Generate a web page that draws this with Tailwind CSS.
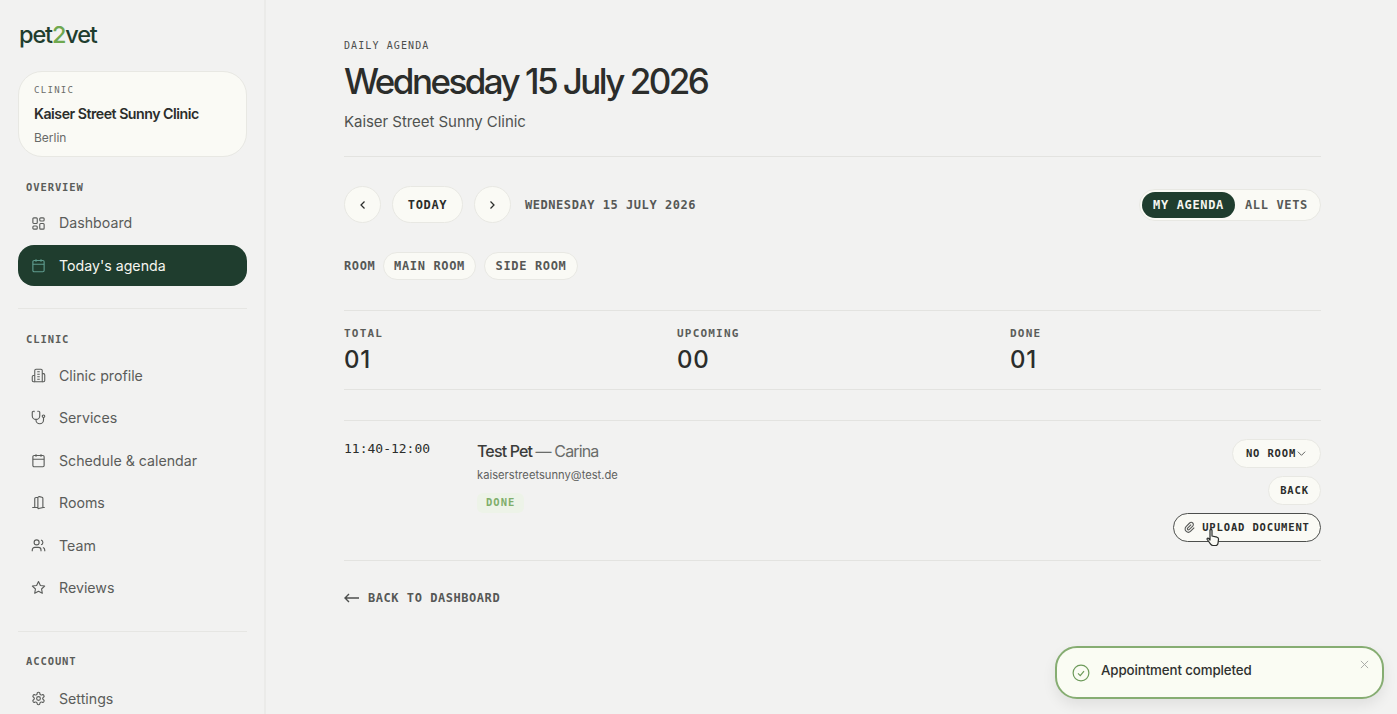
<!DOCTYPE html>
<html lang="en">
<head>
    <meta charset="UTF-8">
    <meta name="viewport" content="width=device-width, initial-scale=1.0">
    <title>pet2vet - Daily agenda</title>
    <script src="https://cdn.jsdelivr.net/npm/@tailwindcss/browser@4"></script>
</head>
<body class="bg-[#f2f2f1] h-[714px] overflow-hidden font-['Inter',sans-serif] text-[#2b2d2b]">
<div class="flex h-[714px] relative overflow-hidden">

    <!-- Sidebar -->
    <aside class="w-[266px] shrink-0 h-full border-r-2 border-[#ebebe9] px-[18px] pt-[19px] overflow-hidden">
        <div class="h-[32px] flex items-center pl-[1px] text-[23.5px] leading-[32px] font-medium tracking-[-1.15px] text-[#1f3d2e]">pet<span class="text-[#6fa84f]">2</span>vet</div>

        <div class="mt-[20px] h-[86px] w-[229px] rounded-[24px] bg-[#fafaf5] border border-[#e8e8e3] pl-[15px] pt-[12px]">
            <div class="font-['DejaVu_Sans_Mono',monospace] text-[9px] leading-[12px] tracking-[1.3px] text-[#6b6d6a]">CLINIC</div>
            <div class="mt-[7px] text-[14.2px] leading-[22px] font-semibold tracking-[-0.5px] text-[#2b2d2b]">Kaiser Street Sunny Clinic</div>
            <div class="mt-[5px] text-[12px] leading-[16px] text-[#686a68]">Berlin</div>
        </div>

        <div class="mt-[23px] pl-[8px] font-['DejaVu_Sans_Mono',monospace] font-bold text-[10.5px] leading-[14px] tracking-[0.9px] text-[#5b5d5a]">OVERVIEW</div>
        <nav class="mt-[8px] flex flex-col w-[229px]">
            <a class="h-[42px] flex items-center gap-[13px] pl-[13px] text-[14.2px] text-[#5a5c5a]">
                <svg class="w-[15px] h-[15px]" viewBox="0 0 24 24" fill="none" stroke="currentColor" stroke-width="1.8"><rect x="3" y="3" width="7" height="9" rx="1.5"/><rect x="14" y="3" width="7" height="5" rx="1.5"/><rect x="14" y="12" width="7" height="9" rx="1.5"/><rect x="3" y="16" width="7" height="5" rx="1.5"/></svg>
                Dashboard
            </a>
            <a class="h-[41px] mt-[1px] flex items-center gap-[13px] pl-[13px] rounded-[16px] bg-[#1f3d2e] text-[14.2px] text-[#f6f6f0]">
                <svg class="w-[15px] h-[15px] text-[#5f9c8f]" viewBox="0 0 24 24" fill="none" stroke="currentColor" stroke-width="1.8"><rect x="3" y="4" width="18" height="18" rx="2"/><path d="M8 2v4M16 2v4M3 10h18M8 14h.01M12 14h.01M16 14h.01M8 18h.01M12 18h.01M16 18h.01"/></svg>
                Today's agenda
            </a>
        </nav>

        <div class="mt-[22px] w-[229px] border-t border-[#e6e6e3]"></div>

        <div class="mt-[23px] pl-[8px] font-['DejaVu_Sans_Mono',monospace] font-bold text-[10.5px] leading-[14px] tracking-[0.9px] text-[#5b5d5a]">CLINIC</div>
        <nav class="mt-[8px] flex flex-col w-[229px] text-[14.2px] text-[#5a5c5a]">
            <a class="h-[42.5px] flex items-center gap-[13px] pl-[13px]">
                <svg class="w-[15px] h-[15px]" viewBox="0 0 24 24" fill="none" stroke="currentColor" stroke-width="1.7"><path d="M6 22V4a2 2 0 0 1 2-2h8a2 2 0 0 1 2 2v18Z"/><path d="M6 12H4a2 2 0 0 0-2 2v6a2 2 0 0 0 2 2h2M18 9h2a2 2 0 0 1 2 2v9a2 2 0 0 1-2 2h-2M10 6h4M10 10h4M10 14h4M10 18h4"/></svg>
                Clinic profile
            </a>
            <a class="h-[42.5px] flex items-center gap-[13px] pl-[13px]">
                <svg class="w-[15px] h-[15px]" viewBox="0 0 24 24" fill="none" stroke="currentColor" stroke-width="1.8"><path d="M4.8 2.3A.3.3 0 1 0 5 2H4a2 2 0 0 0-2 2v5a6 6 0 0 0 6 6 6 6 0 0 0 6-6V4a2 2 0 0 0-2-2h-1a.2.2 0 1 0 .3.3"/><path d="M8 15v1a6 6 0 0 0 6 6 6 6 0 0 0 6-6v-4"/><circle cx="20" cy="10" r="2"/></svg>
                Services
            </a>
            <a class="h-[42.5px] flex items-center gap-[13px] pl-[13px]">
                <svg class="w-[15px] h-[15px]" viewBox="0 0 24 24" fill="none" stroke="currentColor" stroke-width="1.8"><rect x="3" y="4" width="18" height="18" rx="2"/><path d="M8 2v4M16 2v4M3 10h18"/></svg>
                Schedule &amp; calendar
            </a>
            <a class="h-[42.5px] flex items-center gap-[13px] pl-[13px]">
                <svg class="w-[15px] h-[15px]" viewBox="0 0 24 24" fill="none" stroke="currentColor" stroke-width="1.8"><path d="M11 20H2M11 4.562v16.157a1 1 0 0 0 1.242.97L19 20V5.562a2 2 0 0 0-1.515-1.94l-4-1A2 2 0 0 0 11 4.561zM11 4H8a2 2 0 0 0-2 2v14M14 12h.01M22 20h-3"/></svg>
                Rooms
            </a>
            <a class="h-[42.5px] flex items-center gap-[13px] pl-[13px]">
                <svg class="w-[15px] h-[15px]" viewBox="0 0 24 24" fill="none" stroke="currentColor" stroke-width="1.8"><path d="M16 21v-2a4 4 0 0 0-4-4H6a4 4 0 0 0-4 4v2"/><circle cx="9" cy="7" r="4"/><path d="M22 21v-2a4 4 0 0 0-3-3.87M16 3.13a4 4 0 0 1 0 7.75"/></svg>
                Team
            </a>
            <a class="h-[42.5px] flex items-center gap-[13px] pl-[13px]">
                <svg class="w-[15px] h-[15px]" viewBox="0 0 24 24" fill="none" stroke="currentColor" stroke-width="1.8" stroke-linejoin="round"><path d="M12 2.5l3 6.2 6.8 1-4.9 4.7 1.2 6.8-6.1-3.2-6.1 3.2 1.2-6.8-4.9-4.7 6.8-1Z"/></svg>
                Reviews
            </a>
        </nav>

        <div class="mt-[22px] w-[229px] border-t border-[#e6e6e3]"></div>

        <div class="mt-[22px] pl-[8px] font-['DejaVu_Sans_Mono',monospace] font-bold text-[10.5px] leading-[14px] tracking-[0.9px] text-[#5b5d5a]">ACCOUNT</div>
        <nav class="mt-[9px] flex flex-col w-[229px] text-[14.2px] text-[#5a5c5a]">
            <a class="h-[42.5px] flex items-center gap-[13px] pl-[13px]">
                <svg class="w-[15px] h-[15px]" viewBox="0 0 24 24" fill="none" stroke="currentColor" stroke-width="1.8"><path d="M12.2 2h-.4a2 2 0 0 0-2 2v.2a2 2 0 0 1-1 1.7l-.4.3a2 2 0 0 1-2 0l-.2-.1a2 2 0 0 0-2.7.7l-.2.4a2 2 0 0 0 .7 2.7l.2.1a2 2 0 0 1 1 1.7v.5a2 2 0 0 1-1 1.8l-.2.1a2 2 0 0 0-.7 2.7l.2.4a2 2 0 0 0 2.7.7l.2-.1a2 2 0 0 1 2 0l.4.3a2 2 0 0 1 1 1.7v.2a2 2 0 0 0 2 2h.4a2 2 0 0 0 2-2v-.2a2 2 0 0 1 1-1.7l.4-.3a2 2 0 0 1 2 0l.2.1a2 2 0 0 0 2.7-.7l.2-.4a2 2 0 0 0-.7-2.7l-.2-.1a2 2 0 0 1-1-1.8v-.5a2 2 0 0 1 1-1.7l.2-.1a2 2 0 0 0 .7-2.7l-.2-.4a2 2 0 0 0-2.7-.7l-.2.1a2 2 0 0 1-2 0l-.4-.3a2 2 0 0 1-1-1.7V4a2 2 0 0 0-2-2Z"/><circle cx="12" cy="12" r="3"/></svg>
                Settings
            </a>
        </nav>
    </aside>

    <!-- Main -->
    <main class="flex-1 pl-[78px] pr-[76px] pt-[39px]">
        <div class="font-['DejaVu_Sans_Mono',monospace] text-[10px] leading-[14px] tracking-[1.1px] text-[#4d4f4d]">DAILY AGENDA</div>
        <h1 class="mt-[4px] text-[35px] leading-[48px] font-medium tracking-[-2.55px] text-[#2b2d2b]">Wednesday 15 July 2026</h1>
        <p class="mt-[5px] text-[15px] leading-[24px] tracking-[-0.05px] text-[#505250]">Kaiser Street Sunny Clinic</p>

        <div class="mt-[22px] border-t border-[#e3e3e0]"></div>

        <div class="mt-[29px] h-[37px] flex items-center justify-between">
            <div class="flex items-center gap-[11px]">
                <button class="w-[37px] h-[37px] rounded-full bg-[#fafaf5] border border-[#e8e8e3] flex items-center justify-center">
                    <svg class="w-[12px] h-[12px]" viewBox="0 0 24 24" fill="none" stroke="#2b2d2b" stroke-width="2.5"><path d="M15 5l-7 7 7 7"/></svg>
                </button>
                <button class="w-[71px] h-[37px] rounded-full bg-[#fafaf5] border border-[#e8e8e3] font-['DejaVu_Sans_Mono',monospace] font-bold text-[12px] tracking-[0.65px] text-[#2b2d2b]">TODAY</button>
                <button class="w-[37px] h-[37px] rounded-full bg-[#fafaf5] border border-[#e8e8e3] flex items-center justify-center">
                    <svg class="w-[12px] h-[12px]" viewBox="0 0 24 24" fill="none" stroke="#2b2d2b" stroke-width="2.5"><path d="M7 5l7 7-7 7"/></svg>
                </button>
                <span class="ml-[3px] font-['DejaVu_Sans_Mono',monospace] font-bold text-[12px] tracking-[0.55px] text-[#565856]">WEDNESDAY 15 JULY 2026</span>
            </div>
            <div class="h-[32px] w-[182px] rounded-full bg-[#fafaf5] border border-[#e8e8e3] flex items-center px-[2px] font-['DejaVu_Sans_Mono',monospace] font-bold text-[12px] tracking-[0.65px]">
                <span class="h-[26px] w-[93px] rounded-full bg-[#1f3d2e] text-[#f6f6f0] flex items-center justify-center">MY AGENDA</span>
                <span class="flex-1 text-center text-[#565856]">ALL VETS</span>
            </div>
        </div>

        <div class="mt-[29px] h-[28px] flex items-center gap-[8px] font-['DejaVu_Sans_Mono',monospace] font-bold text-[12px] tracking-[0.65px] text-[#565856]">
            <span class="w-[31px]">ROOM</span>
            <span class="h-[28px] w-[93px] rounded-full bg-[#fafaf5] border border-[#e8e8e3] flex items-center justify-center">MAIN ROOM</span>
            <span class="h-[28px] w-[94px] rounded-full bg-[#fafaf5] border border-[#e8e8e3] flex items-center justify-center">SIDE ROOM</span>
        </div>

        <div class="mt-[30px] h-[80px] border-y border-[#e3e3e0] grid grid-cols-3 gap-x-[22px] pt-[16px]">
            <div>
                <div class="font-['DejaVu_Sans_Mono',monospace] font-bold text-[11px] leading-[14px] tracking-[1.2px] text-[#5b5d5a]">TOTAL</div>
                <div class="mt-[4px] text-[24px] leading-[30px] font-medium tracking-[0.8px] text-[#2b2d2b]">01</div>
            </div>
            <div>
                <div class="font-['DejaVu_Sans_Mono',monospace] font-bold text-[11px] leading-[14px] tracking-[1.2px] text-[#5b5d5a]">UPCOMING</div>
                <div class="mt-[4px] text-[24px] leading-[30px] font-medium tracking-[0.8px] text-[#2b2d2b]">00</div>
            </div>
            <div>
                <div class="font-['DejaVu_Sans_Mono',monospace] font-bold text-[11px] leading-[14px] tracking-[1.2px] text-[#5b5d5a]">DONE</div>
                <div class="mt-[4px] text-[24px] leading-[30px] font-medium tracking-[0.8px] text-[#2b2d2b]">01</div>
            </div>
        </div>

        <div class="mt-[30px] h-[141px] border-y border-[#e3e3e0] flex pt-[18px]">
            <div class="w-[133px] font-['DejaVu_Sans_Mono',monospace] text-[13px] leading-[20px] text-[#2b2d2b]">11:40-12:00</div>
            <div class="flex-1 -mt-[1px]">
                <div class="text-[16px] leading-[26px] tracking-[-0.85px] font-medium text-[#3a3c3a]">Test Pet <span class="font-normal text-[#6a6c6a]">— Carina</span></div>
                <div class="mt-[2px] text-[11.2px] leading-[18px] text-[#5f615f]">kaiserstreetsunny@test.de</div>
                <span class="mt-[9px] inline-flex h-[20px] items-center rounded-[6px] px-[9px] bg-[#edf3e8] font-['DejaVu_Sans_Mono',monospace] font-bold text-[10.5px] tracking-[1px] text-[#7fae6b]">DONE</span>
            </div>
            <div class="flex flex-col items-end gap-[8px] font-['DejaVu_Sans_Mono',monospace] font-bold text-[10.5px] tracking-[0.85px] text-[#2b2d2b]">
                <span class="h-[29px] w-[89px] rounded-full bg-[#fafaf5] border border-[#e8e8e3] flex items-center justify-center">NO ROOM<svg class="w-[11px] h-[11px]" viewBox="0 0 24 24" fill="none" stroke="#565856" stroke-width="2"><path d="M4 8l8 8 8-8"/></svg></span>
                <span class="h-[29px] w-[53px] rounded-full bg-[#fafaf5] border border-[#e8e8e3] flex items-center justify-center">BACK</span>
                <span class="h-[29px] w-[148px] rounded-full bg-[#fafaf5] border border-[#4d4f4d] flex items-center justify-center gap-[5px]">
                    <svg class="w-[13px] h-[13px]" viewBox="0 0 24 24" fill="none" stroke="#565856" stroke-width="2"><path d="M13.2 6.6l-6.500 6.600a2 2 0 0 0 2.800 2.800l6.600-6.600a4 4 0 0 0-5.700-5.700l-6.600 6.600a6 6 0 0 0 8.500 8.500l6.600-6.600"/></svg>
                    UPLOAD DOCUMENT
                </span>
            </div>
        </div>

        <div class="mt-[28px] h-[18px] flex items-center gap-[9px] font-['DejaVu_Sans_Mono',monospace] font-bold text-[12px] tracking-[0.55px] text-[#565856]">
            <svg class="w-[15px] h-[10px]" viewBox="0 0 15 10" fill="none" stroke="#4d4f4d" stroke-width="1.4"><path d="M15 5H1M5 1L1 5l4 4"/></svg>
            BACK TO DASHBOARD
        </div>
    </main>

    <!-- Cursor over the upload button -->
    <svg class="absolute left-[1206px] top-[529px] w-[14px] h-[18px]" viewBox="0 0 14 18" fill="#fafaf5" stroke="#2b2d2b" stroke-width="1.2" stroke-linejoin="round"><path d="M4 1.500a1 1 0 0 1 2 0V7l5 1.200c1 .3 1.600 1 1.500 2l-.5 4c-.2 1.400-1 2.300-2.400 2.300H7c-1 0-1.800-.5-2.400-1.400L1.200 10.500c-.5-1 .7-1.800 1.500-1L4 11Z"/></svg>

    <!-- Toast -->
    <div class="absolute left-[1055px] top-[646px] w-[329px] h-[53px] rounded-[22px] bg-[#fafcf3] border-2 border-[#86ad72] shadow-[0_6px_14px_rgba(0,0,0,0.08)] flex pl-[15px] pt-[15px]">
        <svg class="w-[18px] h-[18px] mt-[1px]" viewBox="0 0 24 24" fill="none" stroke="#6d9a5a" stroke-width="1.6"><circle cx="12" cy="12" r="10.500"/><path d="M8 12.500l3 3 5-6"/></svg>
        <span class="ml-[11px] -mt-[3px] text-[13.300px] leading-[20px] font-medium tracking-[-0.1px] text-[#2f312f]">Appointment completed</span>
        <svg class="absolute right-[13px] top-[12px] w-[9px] h-[9px]" viewBox="0 0 10 10" fill="none" stroke="#a3a5a2" stroke-width="1"><path d="M1 1l8 8M9 1l-8 8"/></svg>
    </div>
</div>
</body>
</html>
